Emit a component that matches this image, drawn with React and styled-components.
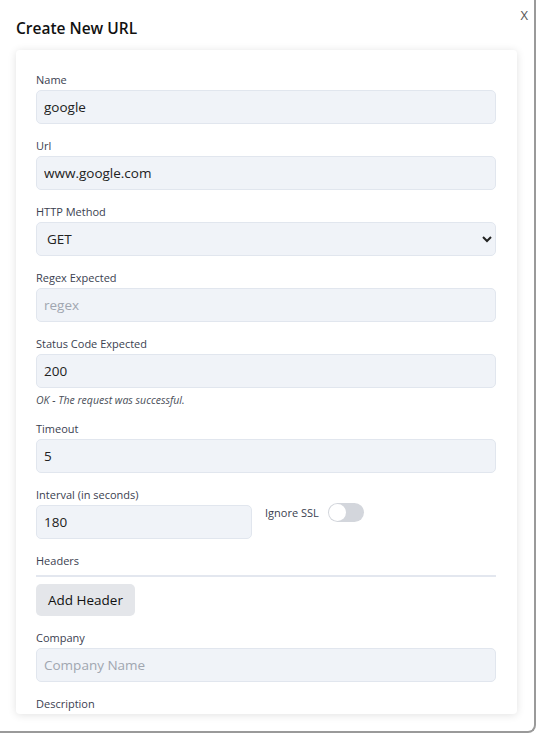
import styled, { createGlobalStyle } from "styled-components";

const Global = createGlobalStyle`
  body { margin: 0; font-family: "Open Sans", "Noto Sans", sans-serif; background: #fff; }
`;

const Modal = styled.div`
  position: relative;
  width: 534px;
  height: 731px;
  background: #fff;
  border-right: 2px solid #9a9a9a;
  border-bottom: 2px solid #9a9a9a;
  border-bottom-right-radius: 8px;
  box-sizing: content-box;
`;

const Close = styled.button`
  position: absolute;
  top: 6px;
  right: 6px;
  border: none;
  background: none;
  font-family: inherit;
  font-size: 13px;
  color: #555;
  padding: 0;
`;

const Title = styled.h2`
  margin: 0;
  padding: 17px 16px 0;
  font-size: 15.5px;
  line-height: 22px;
  font-weight: 600;
  color: #111;
`;

const Card = styled.div`
  margin: 11px 0 0 16px;
  width: 501px;
  height: 664px;
  box-sizing: border-box;
  overflow-y: scroll;
  padding: 24px 21px 0 20px;
  box-shadow: 0 1px 8px rgba(0, 0, 0, 0.12);
  border-radius: 4px;

  &::-webkit-scrollbar { width: 15px; }
  &::-webkit-scrollbar-track { background: #fff; }
  &::-webkit-scrollbar-thumb {
    background: #8a8a8a;
    border-radius: 6px;
    border: 5px solid #fff;
    border-top-width: 2px;
    border-bottom-width: 2px;
  }
  &::-webkit-scrollbar-button:single-button {
    display: block;
    height: 14px;
    background-repeat: no-repeat;
    background-position: center;
    background-size: 8px 6px;
  }
  &::-webkit-scrollbar-button:single-button:vertical:decrement {
    background-image: linear-gradient(to top right, transparent 50%, #8a8a8a 50%),
      linear-gradient(to top left, transparent 50%, #8a8a8a 50%);
    background-size: 4px 5px, 4px 5px;
    background-position: 3px 5px, 7px 5px;
  }
  &::-webkit-scrollbar-button:single-button:vertical:increment {
    background-image: linear-gradient(to bottom right, transparent 50%, #8a8a8a 50%),
      linear-gradient(to bottom left, transparent 50%, #8a8a8a 50%);
    background-size: 4px 5px, 4px 5px;
    background-position: 3px 4px, 7px 4px;
  }
`;

const Field = styled.div`
  margin-bottom: 16px;
`;

const Label = styled.label`
  display: block;
  font-size: 11px;
  line-height: 12px;
  font-weight: 500;
  color: #3b4150;
  margin-bottom: 4px;
`;

const Input = styled.input`
  display: block;
  width: ${(p) => p.w || "100%"};
  height: 34px;
  box-sizing: border-box;
  background: #f0f3f8;
  border: 1px solid #e1e6ee;
  border-radius: 5px;
  padding: 0 7px;
  font-family: inherit;
  font-size: 13.5px;
  color: #222;
  &::placeholder { color: #a0a6b0; }
`;

const Select = styled.select`
  display: block;
  width: 100%;
  height: 34px;
  background: #f0f3f8;
  border: 1px solid #e1e6ee;
  border-radius: 5px;
  padding: 0 6px;
  font-family: inherit;
  font-size: 13.5px;
  color: #222;
`;

const Help = styled.p`
  margin: 5px 0 0;
  font-size: 10.5px;
  line-height: 14px;
  font-style: italic;
  color: #4a4f59;
`;

const Row = styled.div`
  display: flex;
  align-items: flex-start;
  gap: 13px;
`;

const Inline = styled.div`
  display: flex;
  align-items: center;
  gap: 9px;
  margin-top: 14px;
  font-size: 11px;
  font-weight: 500;
  color: #3b4150;
`;

const Toggle = styled.div`
  width: 36px;
  height: 19px;
  border-radius: 10px;
  background: #d3d6dc;
  position: relative;
  &::after {
    content: "";
    position: absolute;
    left: 1px;
    top: 1px;
    width: 17px;
    height: 17px;
    border-radius: 50%;
    background: #fff;
  }
`;

const Divider = styled.div`
  height: 2px;
  background: #e3e7ef;
  margin: 8px 0 7px;
`;

const Button = styled.button`
  display: block;
  height: 32px;
  padding: 0 12px;
  border: none;
  border-radius: 5px;
  background: #e4e6ea;
  font-family: inherit;
  font-size: 13.5px;
  color: #111;
`;

export default function App() {
  return (
    <>
      <Global />
      <Modal>
        <Close>X</Close>
        <Title>Create New URL</Title>
        <Card>
          <Field>
            <Label>Name</Label>
            <Input defaultValue="google" />
          </Field>
          <Field>
            <Label>Url</Label>
            <Input defaultValue="www.google.com" />
          </Field>
          <Field>
            <Label>HTTP Method</Label>
            <Select defaultValue="GET">
              <option>GET</option>
              <option>POST</option>
            </Select>
          </Field>
          <Field>
            <Label>Regex Expected</Label>
            <Input placeholder="regex" />
          </Field>
          <Field>
            <Label>Status Code Expected</Label>
            <Input defaultValue="200" />
            <Help>OK - The request was successful.</Help>
          </Field>
          <Field>
            <Label>Timeout</Label>
            <Input defaultValue="5" />
          </Field>
          <Field>
            <Row>
              <div>
                <Label>Interval (in seconds)</Label>
                <Input w="216px" defaultValue="180" />
              </div>
              <Inline>
                Ignore SSL <Toggle />
              </Inline>
            </Row>
          </Field>
          <Field>
            <Label>Headers</Label>
            <Divider />
            <Button>Add Header</Button>
          </Field>
          <Field>
            <Label>Company</Label>
            <Input placeholder="Company Name" />
          </Field>
          <Field>
            <Label>Description</Label>
            <Input />
          </Field>
        </Card>
      </Modal>
    </>
  );
}
